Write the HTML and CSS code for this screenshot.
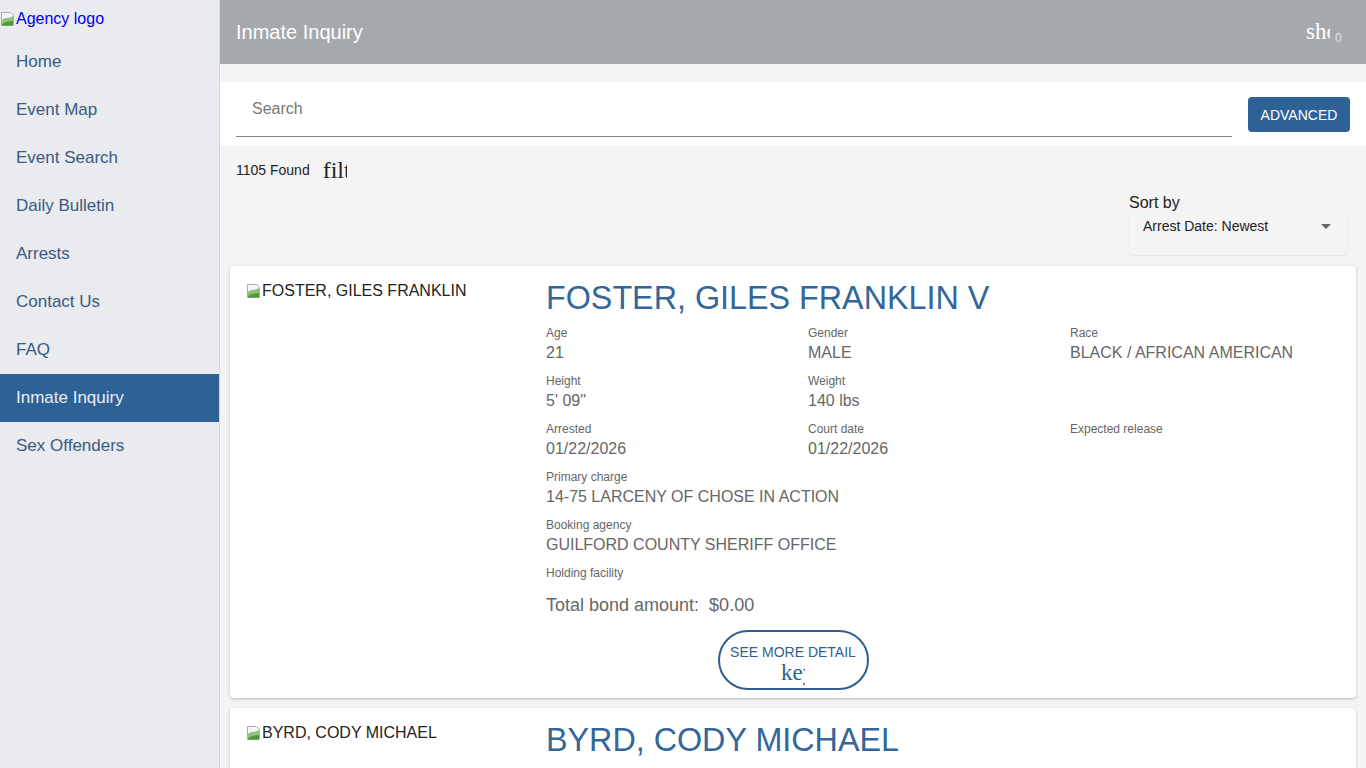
FILE: index.html
```html
<!DOCTYPE html>
<html lang="en">
<head>
<meta charset="utf-8">
<title>Inmate Inquiry</title>
<link rel="stylesheet" href="styles.css">
</head>
<body>
<div class="app">
  <aside class="sidebar">
    <div class="logo">
      <svg class="broken" width="16" height="16" viewBox="0 0 16 16"><path d="M1.5 1.5h9l3 3v10h-12z" fill="#f4f6f8" stroke="#a7adb3"/><path d="M2 9c3-3 6-1 11-4v9.5H2z" fill="#8fc27a"/><path d="M2 13c3-2 7-3 11-3v4.5H2z" fill="#4e9a3a"/></svg><span class="logo-alt">Agency logo</span>
    </div>
    <nav class="nav">
      <a class="nav-item">Home</a>
      <a class="nav-item">Event Map</a>
      <a class="nav-item">Event Search</a>
      <a class="nav-item">Daily Bulletin</a>
      <a class="nav-item">Arrests</a>
      <a class="nav-item">Contact Us</a>
      <a class="nav-item">FAQ</a>
      <a class="nav-item active">Inmate Inquiry</a>
      <a class="nav-item">Sex Offenders</a>
    </nav>
  </aside>
  <main class="main">
    <header class="topbar">
      <h1 class="title">Inmate Inquiry</h1>
      <div class="top-icon"><span class="ligature">show_chart</span><span class="badge">0</span></div>
    </header>
    <section class="search-band">
      <div class="search-field"><span class="placeholder">Search</span></div>
      <button class="btn-advanced">ADVANCED</button>
    </section>
    <div class="count-row">
      <span class="count">1105 Found</span>
      <span class="ligature filter">filter_list</span>
    </div>
    <div class="sort-row">
      <div class="sort">
        <div class="sort-label">Sort by</div>
        <div class="sort-select"><span>Arrest Date: Newest</span><span class="caret"></span></div>
      </div>
    </div>

    <article class="card">
      <div class="photo"><svg class="broken" width="16" height="16" viewBox="0 0 16 16"><path d="M1.5 1.5h9l3 3v10h-12z" fill="#f4f6f8" stroke="#a7adb3"/><path d="M2 9c3-3 6-1 11-4v9.5H2z" fill="#8fc27a"/><path d="M2 13c3-2 7-3 11-3v4.5H2z" fill="#4e9a3a"/></svg><span>FOSTER, GILES FRANKLIN</span></div>
      <div class="info">
        <h2 class="name">FOSTER, GILES FRANKLIN V</h2>
        <div class="fields">
          <div class="field"><div class="label">Age</div><div class="value">21</div></div>
          <div class="field"><div class="label">Gender</div><div class="value">MALE</div></div>
          <div class="field"><div class="label">Race</div><div class="value">BLACK / AFRICAN AMERICAN</div></div>
          <div class="field"><div class="label">Height</div><div class="value">5' 09"</div></div>
          <div class="field"><div class="label">Weight</div><div class="value">140 lbs</div></div>
          <div class="field"></div>
          <div class="field"><div class="label">Arrested</div><div class="value">01/22/2026</div></div>
          <div class="field"><div class="label">Court date</div><div class="value">01/22/2026</div></div>
          <div class="field"><div class="label">Expected release</div><div class="value"></div></div>
          <div class="field wide"><div class="label">Primary charge</div><div class="value">14-75 LARCENY OF CHOSE IN ACTION</div></div>
          <div class="field wide"><div class="label">Booking agency</div><div class="value">GUILFORD COUNTY SHERIFF OFFICE</div></div>
          <div class="field wide short"><div class="label">Holding facility</div></div>
        </div>
        <p class="bond">Total bond amount:&nbsp; $0.00</p>
      </div>
      <div class="more-wrap">
        <button class="btn-more"><span>SEE MORE DETAIL</span><span class="ligature arrow">keyboard_arrow_down</span></button>
      </div>
    </article>

    <article class="card">
      <div class="photo"><svg class="broken" width="16" height="16" viewBox="0 0 16 16"><path d="M1.5 1.5h9l3 3v10h-12z" fill="#f4f6f8" stroke="#a7adb3"/><path d="M2 9c3-3 6-1 11-4v9.5H2z" fill="#8fc27a"/><path d="M2 13c3-2 7-3 11-3v4.5H2z" fill="#4e9a3a"/></svg><span>BYRD, CODY MICHAEL</span></div>
      <div class="info">
        <h2 class="name">BYRD, CODY MICHAEL</h2>
        <div class="fields">
          <div class="field"><div class="label">Age</div><div class="value"></div></div>
          <div class="field"><div class="label">Gender</div><div class="value"></div></div>
          <div class="field"><div class="label">Race</div><div class="value"></div></div>
        </div>
      </div>
    </article>
  </main>
</div>
</body>
</html>
```

FILE: styles.css
```css
* { box-sizing: border-box; }
html, body { margin: 0; padding: 0; }
body {
  font-family: "Liberation Sans", Arial, sans-serif;
  background: #f4f4f4;
  color: #222;
}
.app { display: flex; min-height: 100vh; }

.sidebar {
  width: 220px;
  flex: 0 0 220px;
  background: #e9ebee;
  border-right: 1px solid #d3d6d9;
  position: sticky;
  top: 0;
  height: 100vh;
}
.logo {
  height: 38px;
  display: flex;
  align-items: flex-start;
  padding-top: 10px;
  font-size: 16px;
  line-height: 18px;
}
.logo .broken { flex: 0 0 16px; margin-top: 1px; }
.logo-alt { color: #0000ee; }
.nav { display: flex; flex-direction: column; }
.nav-item {
  display: block;
  height: 48px;
  line-height: 48px;
  padding-left: 16px;
  font-size: 17px;
  color: #3b5a82;
  text-decoration: none;
}
.nav-item.active { background: #2e6196; color: #e8eef6; }

.main { flex: 1; min-width: 0; }

.topbar {
  height: 64px;
  background: #a5a9ac;
  display: flex;
  align-items: center;
  justify-content: space-between;
  padding: 0 36px 0 16px;
  margin-bottom: 18px;
}
.title { margin: 0; font-weight: normal; font-size: 20px; color: #fff; }
.top-icon { position: relative; display: flex; align-items: center; }
.ligature {
  font-family: "Liberation Serif", "Times New Roman", serif;
  display: inline-block;
  width: 24px;
  overflow: hidden;
  white-space: nowrap;
}
.top-icon .ligature { color: #fff; font-size: 23px; line-height: 24px; }
.badge {
  position: absolute;
  left: 29px;
  top: 11px;
  font-size: 12px;
  line-height: 14px;
  color: #e3e5e7;
}

.search-band {
  background: #fff;
  height: 64px;
  display: flex;
  align-items: flex-start;
  padding: 0 16px;
  gap: 16px;
}
.search-field {
  flex: 1;
  height: 55px;
  border-bottom: 1px solid #8a8a8a;
  padding: 18px 0 0 16px;
}
.placeholder { font-size: 16px; color: #777; line-height: 18px; }
.btn-advanced {
  margin-top: 15px;
  width: 102px;
  height: 35px;
  background: #2e6196;
  color: #fff;
  border: 0;
  border-radius: 4px;
  font-family: "Liberation Sans", Arial, sans-serif;
  font-size: 14px;
  padding: 0;
}

.count-row {
  display: flex;
  align-items: center;
  height: 48px;
  padding-left: 16px;
  gap: 13px;
}
.count { font-size: 14px; color: #222; }
.filter { font-size: 24px; color: #222; line-height: 26px; }

.sort-row { display: flex; justify-content: flex-end; padding-right: 19px; margin-top: 0; }
.sort { width: 218px; }
.sort-label { font-size: 16px; line-height: 16px; color: #222; margin-top: 1px; }
.sort-select {
  height: 44px;
  display: flex;
  align-items: flex-start;
  justify-content: space-between;
  padding: 7px 16px 0 14px;
  font-size: 14px;
  line-height: 16px;
  color: #222;
  background: #f4f4f4;
  box-shadow: 0 1px 2px rgba(0,0,0,0.06), 0 0 1px rgba(0,0,0,0.08);
  border-radius: 4px;
}
.caret {
  width: 0; height: 0;
  margin-top: 6px;
  border-left: 5px solid transparent;
  border-right: 5px solid transparent;
  border-top: 5px solid #666;
}

.card {
  background: #fff;
  margin: 11px 10px 10px;
  border-radius: 4px;
  box-shadow: 0 1px 3px rgba(0,0,0,0.25);
  padding: 14px 16px 8px;
  display: flex;
  flex-wrap: wrap;
}
.card + .card { margin-top: 10px; }
.photo {
  width: 300px;
  flex: 0 0 300px;
  display: flex;
  align-items: flex-start;
  font-size: 16px;
  line-height: 20px;
  color: #222;
  padding-top: 1px;
}
.photo .broken { flex: 0 0 16px; margin-top: 2px; }
.info { flex: 1; min-width: 0; }
.name {
  margin: 0 0 9px;
  font-weight: normal;
  font-size: 32.3px;
  line-height: 36px;
  color: #336699;
}
.fields { display: grid; grid-template-columns: repeat(3, 262px); }
.field { height: 48px; }
.field.wide { grid-column: 1 / -1; }
.field.short { height: 16px; }
.label { font-size: 12px; line-height: 16px; color: #666; }
.value { font-size: 16px; line-height: 24px; color: #666; }
.bond { margin: 12px 0 0; font-size: 18px; line-height: 24px; color: #666; }
.more-wrap { flex: 0 0 100%; display: flex; justify-content: center; margin-top: 13px; }
.btn-more {
  width: 151px;
  height: 60px;
  border: 2px solid #2e5f8e;
  border-radius: 30px;
  background: #fff;
  color: #2e5f8e;
  display: flex;
  flex-direction: column;
  align-items: center;
  justify-content: flex-start;
  padding: 11px 0 0;
  font-family: "Liberation Sans", Arial, sans-serif;
  font-size: 14px;
  line-height: 18px;
}
.btn-more .arrow { font-size: 23px; line-height: 24px; color: #2e5f8e; }
```
